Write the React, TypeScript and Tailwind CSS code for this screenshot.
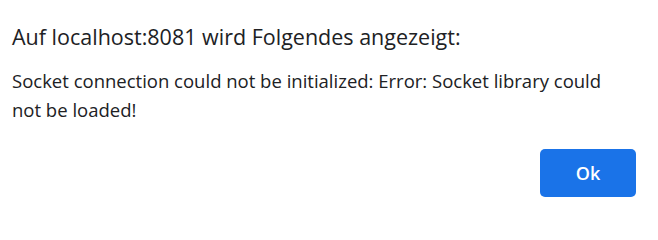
import React from "react";

export default function App() {
  return (
    <div
      className="w-[658px] h-[209px] bg-white pl-3 pr-[22px] pt-[24px] text-[#202124]"
      style={{ fontFamily: '"Segoe UI", "Open Sans", "Noto Sans", sans-serif' }}
    >
      <div className="text-[21.5px] leading-[26px] whitespace-nowrap">
        Auf localhost:8081 wird Folgendes angezeigt:
      </div>
      <div className="mt-[16px] w-[605px] text-[18.5px] leading-[29px]">
        Socket connection could not be initialized: Error: Socket library could not be loaded!
      </div>
      <div className="mt-[25px] flex justify-end">
        <button className="w-[96px] h-[48px] rounded-[5px] bg-[#1a73e8] text-white text-[18px] font-semibold">
          Ok
        </button>
      </div>
    </div>
  );
}
